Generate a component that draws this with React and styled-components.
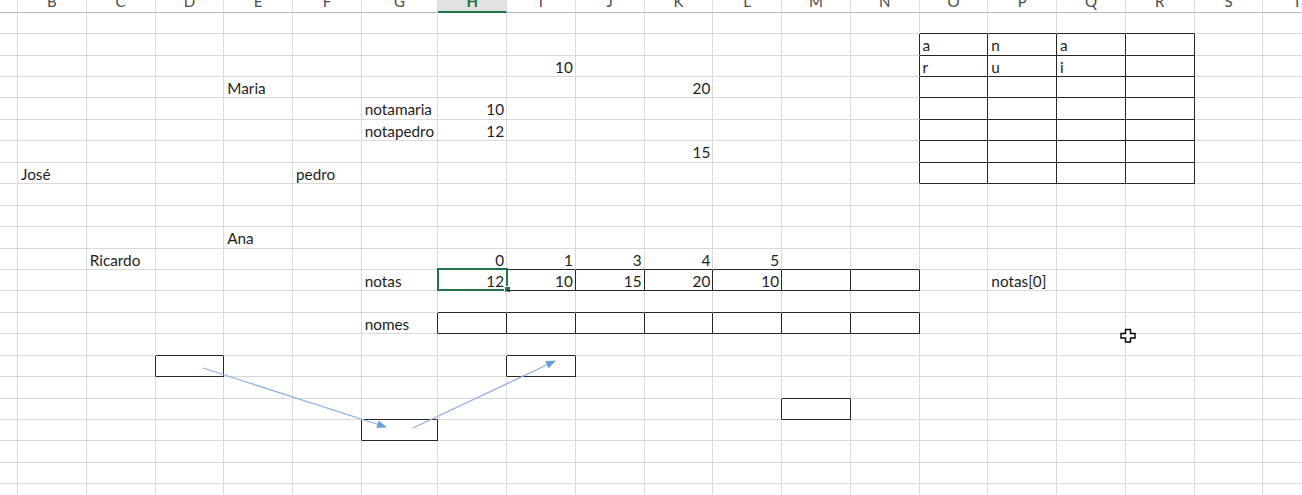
import React from "react";
import styled, { createGlobalStyle } from "styled-components";

const GlobalStyle = createGlobalStyle`
  html, body {
    margin: 0;
    padding: 0;
    background: #ffffff;
    overflow: hidden;
  }
`;

const COLS = "ABCDEFGHIJKLMNOPQRST".split("");
const WIDTHS = [18, 68.75, 68.75, 68.75, 68.75, 68.75, 76.6].concat(
  Array(13).fill(68.75)
);
const ROW_COUNT = 23;
const HEADER_H = 12.7;
const ROW_H = 21.45;

// what is typed in the sheet: [row, column, value]
const DATA = [
  [1, "O", "a"], [1, "P", "n"], [1, "Q", "a"],
  [2, "I", 10], [2, "O", "r"], [2, "P", "u"], [2, "Q", "i"],
  [3, "E", "Maria"], [3, "K", 20],
  [4, "G", "notamaria"], [4, "H", 10],
  [5, "G", "notapedro"], [5, "H", 12],
  [6, "K", 15],
  [7, "B", "José"], [7, "F", "pedro"],
  [10, "E", "Ana"],
  [11, "C", "Ricardo"], [11, "H", 0], [11, "I", 1], [11, "J", 3], [11, "K", 4], [11, "L", 5],
  [12, "G", "notas"], [12, "H", 12], [12, "I", 10], [12, "J", 15], [12, "K", 20], [12, "L", 10],
  [12, "P", "notas[0]"],
  [14, "G", "nomes"]
];

// ranges with thin black borders
const BORDERED = [
  { r1: 1, r2: 7, c1: "O", c2: "R" },
  { r1: 12, r2: 12, c1: "H", c2: "N" },
  { r1: 14, r2: 14, c1: "H", c2: "N" },
  { r1: 16, r2: 16, c1: "D", c2: "D" },
  { r1: 16, r2: 16, c1: "I", c2: "I" },
  { r1: 18, r2: 18, c1: "M", c2: "M" },
  { r1: 19, r2: 19, c1: "G", c2: "G" }
];

const SELECTED = { r: 12, c: "H" };

const isBordered = (r, c) =>
  BORDERED.some(
    b =>
      r >= b.r1 &&
      r <= b.r2 &&
      c >= COLS.indexOf(b.c1) &&
      c <= COLS.indexOf(b.c2)
  );

const Sheet = styled.div`
  position: relative;
  width: 1302px;
  height: 495px;
  overflow: hidden;
  display: grid;
  grid-template-columns: ${p => p.$cols};
  grid-template-rows: ${HEADER_H}px repeat(${ROW_COUNT}, ${ROW_H}px);
  font-family: Lato, "Liberation Sans", sans-serif;
  font-size: 15.3px;
  color: #1e1e1e;
`;

const HeaderCell = styled.div`
  box-sizing: border-box;
  display: flex;
  justify-content: center;
  align-items: flex-start;
  overflow: hidden;
  background: ${p => (p.$active ? "#e1e1e1" : "#ffffff")};
  border-right: 1px solid #dcdcdc;
  border-bottom: ${p => (p.$active ? "2px solid #217346" : "1px solid #b8b8b8")};
  color: ${p => (p.$active ? "#217346" : "#4a4a4a")};
  font-size: 15px;
  line-height: 15px;
`;

const HeaderLetter = styled.span`
  margin-top: -5.6px;
  font-weight: ${p => (p.$active ? 700 : 400)};
`;

const Cell = styled.div`
  position: relative;
  box-sizing: border-box;
  display: flex;
  justify-content: ${p => (p.$numeric ? "flex-end" : "flex-start")};
  padding: 1px 2px 0 3px;
  line-height: ${ROW_H - 1}px;
  white-space: nowrap;
  border-right: 1px solid ${p => (p.$rightLine ? "#262626" : "#d9d9d9")};
  border-bottom: 1px solid ${p => (p.$bottomLine ? "#262626" : "#d9d9d9")};
`;

const Selection = styled.div`
  position: absolute;
  top: -2px;
  left: -1px;
  right: -2px;
  bottom: -1px;
  border: 2px solid #217346;
  pointer-events: none;
`;

const FillHandle = styled.div`
  position: absolute;
  right: -5px;
  bottom: -4px;
  width: 5px;
  height: 5px;
  background: #217346;
  border: 1px solid #ffffff;
`;

const Drawing = styled.svg`
  position: absolute;
  left: 0;
  top: 0;
  width: 1302px;
  height: 495px;
  pointer-events: none;
`;

const valueAt = (r, c) => {
  const hit = DATA.find(d => d[0] === r && d[1] === COLS[c]);
  return hit ? hit[2] : null;
};

const Arrows = () => (
  <Drawing viewBox="0 0 1302 495">
    <defs>
      <marker
        id="head"
        viewBox="0 0 10 8"
        refX="9"
        refY="4"
        markerWidth="10"
        markerHeight="8"
        markerUnits="userSpaceOnUse"
        orient="auto"
      >
        <path d="M0,0 L10,4 L0,8 z" fill="#6a9ddc" />
      </marker>
    </defs>
    <line
      x1="203"
      y1="368"
      x2="386"
      y2="427"
      stroke="#8db3e2"
      strokeWidth="1.3"
      markerEnd="url(#head)"
    />
    <line
      x1="413"
      y1="428"
      x2="555"
      y2="361"
      stroke="#8db3e2"
      strokeWidth="1.3"
      markerEnd="url(#head)"
    />
    {/* fat cross cell cursor */}
    <path
      d="M1125.5,329.5 h5 v4 h4.5 v4.5 h-4.5 v4 h-5 v-4 h-4.5 v-4.5 h4.5 z"
      fill="#ffffff"
      stroke="#000000"
      strokeWidth="1.4"
      strokeLinejoin="miter"
    />
  </Drawing>
);

const App = () => {
  const rows = [];
  for (let r = 0; r < ROW_COUNT; r++) {
    COLS.forEach((col, c) => {
      const value = valueAt(r, c);
      const own = isBordered(r, c);
      const selected = SELECTED.r === r && SELECTED.c === col;
      rows.push(
        <Cell
          key={`${r}-${col}`}
          $numeric={typeof value === "number"}
          $rightLine={own || isBordered(r, c + 1)}
          $bottomLine={own || isBordered(r + 1, c)}
        >
          {value}
          {selected && (
            <Selection>
              <FillHandle />
            </Selection>
          )}
        </Cell>
      );
    });
  }

  return (
    <>
      <GlobalStyle />
      <Sheet $cols={WIDTHS.map(w => `${w}px`).join(" ")}>
        {COLS.map(col => (
          <HeaderCell key={col} $active={col === SELECTED.c}>
            {col !== "A" && (
              <HeaderLetter $active={col === SELECTED.c}>{col}</HeaderLetter>
            )}
          </HeaderCell>
        ))}
        {rows}
        <Arrows />
      </Sheet>
    </>
  );
};

export default App;
